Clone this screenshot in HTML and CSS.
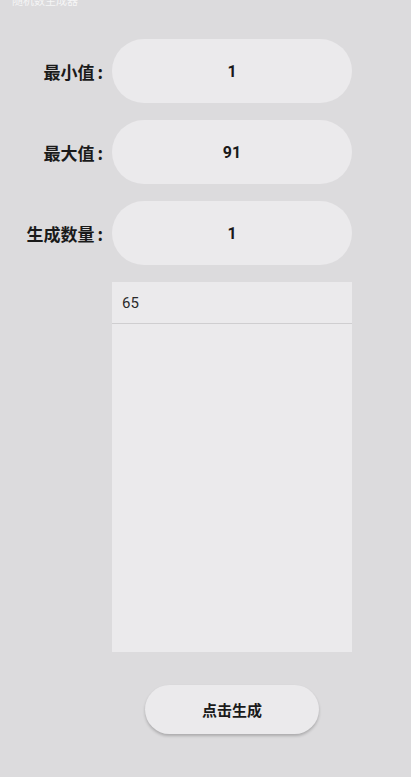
FILE: index.html
```html
<!DOCTYPE html>
<html lang="zh">
<head>
<meta charset="utf-8">
<title>随机数生成</title>
<link rel="stylesheet" href="styles.css">
</head>
<body>
<div class="title">随机数生成器</div>
<div class="form">
  <div class="row"><div class="label">最小值<span class="colon">:</span></div><div class="pill">1</div></div>
  <div class="row"><div class="label">最大值<span class="colon">:</span></div><div class="pill">91</div></div>
  <div class="row"><div class="label">生成数量<span class="colon">:</span></div><div class="pill">1</div></div>
</div>
<div class="result">
  <div class="item">65</div>
</div>
<div class="btn-wrap"><div class="btn">点击生成</div></div>
</body>
</html>
```
FILE: styles.css
```css
html, body {
  margin: 0;
  padding: 0;
  background: #dcdbdd;
  height: 777px;
  overflow: hidden;
  font-family: "Roboto", "Noto Sans CJK SC", sans-serif;
  color: #1a1a1a;
}
.title {
  margin-top: -6px;
  margin-left: 12px;
  font-size: 11px;
  line-height: 12px;
  color: rgba(255,255,255,0.75);
  font-family: "Noto Sans CJK SC", sans-serif;
}
.form {
  margin-top: 33px;
  display: flex;
  flex-direction: column;
  gap: 17px;
}
.row {
  display: flex;
  align-items: center;
}
.label {
  width: 103px;
  padding-right: 9px;
  text-align: right;
  font-family: "Noto Sans CJK SC", sans-serif;
  font-weight: 700;
  font-size: 17px;
  color: #1a1a1a;
}
.colon {
  margin-left: 3px;
}
.pill {
  width: 240px;
  height: 64px;
  border-radius: 32px;
  background: #ebeaec;
  display: flex;
  align-items: center;
  justify-content: center;
  font-family: "Roboto", "Noto Sans CJK SC", sans-serif;
  font-weight: 700;
  font-size: 16px;
  color: #1a1a1a;
}
.result {
  margin-top: 17px;
  margin-left: 112px;
  width: 240px;
  height: 370px;
  background: #ebeaec;
}
.item {
  height: 42px;
  box-sizing: border-box;
  border-bottom: 1px solid #cfced0;
  padding-left: 10px;
  display: flex;
  align-items: center;
  font-size: 15px;
  color: #2a2a2a;
}
.btn-wrap {
  margin-top: 33px;
  padding-left: 145px;
}
.btn {
  width: 174px;
  height: 49px;
  border-radius: 25px;
  background: #ebeaec;
  box-shadow: 0 2px 3px rgba(0,0,0,0.22);
  display: flex;
  align-items: center;
  justify-content: center;
  font-family: "Noto Sans CJK SC", sans-serif;
  font-weight: 700;
  font-size: 15px;
  color: #1a1a1a;
}
```
